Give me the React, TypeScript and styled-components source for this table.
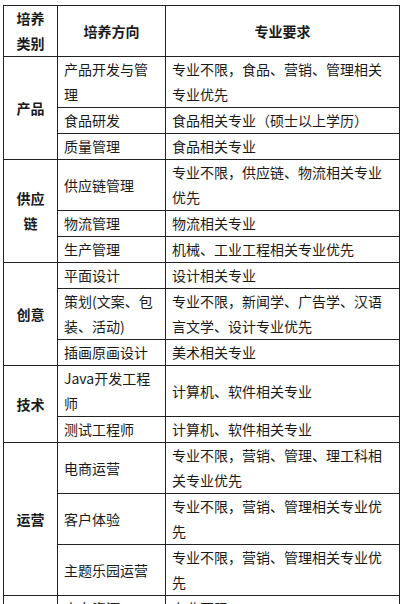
import React from 'react';
import styled, { createGlobalStyle } from 'styled-components';

const GlobalStyle = createGlobalStyle`
  html, body {
    margin: 0;
    padding: 0;
    background: #fff;
  }
  body {
    font-family: 'Microsoft YaHei', 'Noto Sans CJK SC', 'Noto Sans', sans-serif;
    color: #1a1a1a;
  }
`;

const Page = styled.div`
  padding: 0 0 0 3px;
`;

// bottom edge of a heading scrolled just out of view
const Caption = styled.div`
  height: 5px;
  overflow: hidden;
  color: #3a7bd0;
  font-size: 14px;
  font-weight: bold;
  line-height: 16px;

  span {
    display: block;
    margin-top: -16px;
  }
`;

const Table = styled.table`
  width: 396px;
  border-collapse: collapse;
  table-layout: fixed;
  font-size: 14px;
  line-height: 25px;
`;

const Cell = styled.td<{ $head?: boolean; $center?: boolean }>`
  border: 1px solid #222;
  padding: 0 6px;
  vertical-align: middle;
  text-align: ${({ $center }) => ($center ? 'center' : 'left')};
  font-weight: ${({ $head }) => ($head ? 'bold' : 'normal')};
  word-break: break-all;
`;

interface Row {
  direction: string;
  requirement: string;
}

interface Group {
  category: string;
  rows: Row[];
}

const groups: Group[] = [
  {
    category: '产品',
    rows: [
      { direction: '产品开发与管理', requirement: '专业不限，食品、营销、管理相关专业优先' },
      { direction: '食品研发', requirement: '食品相关专业（硕士以上学历）' },
      { direction: '质量管理', requirement: '食品相关专业' },
    ],
  },
  {
    category: '供应链',
    rows: [
      { direction: '供应链管理', requirement: '专业不限，供应链、物流相关专业优先' },
      { direction: '物流管理', requirement: '物流相关专业' },
      { direction: '生产管理', requirement: '机械、工业工程相关专业优先' },
    ],
  },
  {
    category: '创意',
    rows: [
      { direction: '平面设计', requirement: '设计相关专业' },
      { direction: '策划(文案、包装、活动)', requirement: '专业不限，新闻学、广告学、汉语言文学、设计专业优先' },
      { direction: '插画原画设计', requirement: '美术相关专业' },
    ],
  },
  {
    category: '技术',
    rows: [
      { direction: 'Java开发工程师', requirement: '计算机、软件相关专业' },
      { direction: '测试工程师', requirement: '计算机、软件相关专业' },
    ],
  },
  {
    category: '运营',
    rows: [
      { direction: '电商运营', requirement: '专业不限，营销、管理、理工科相关专业优先' },
      { direction: '客户体验', requirement: '专业不限，营销、管理相关专业优先' },
      { direction: '主题乐园运营', requirement: '专业不限，营销、管理相关专业优先' },
    ],
  },
  {
    category: '职能',
    rows: [
      { direction: '人力资源', requirement: '专业不限' },
      { direction: '财务管理', requirement: '财务、会计相关专业' },
      { direction: '法务', requirement: '法学相关专业' },
    ],
  },
];

const App: React.FC = () => {
  return (
    <Page>
      <GlobalStyle />
      <Caption>
        <span>二、培养方向</span>
      </Caption>
      <Table>
        <colgroup>
          <col style={{ width: 54 }} />
          <col style={{ width: 108 }} />
          <col style={{ width: 234 }} />
        </colgroup>
        <thead>
          <tr>
            <Cell as='th' $head $center>
              培养类别
            </Cell>
            <Cell as='th' $head $center>
              培养方向
            </Cell>
            <Cell as='th' $head $center>
              专业要求
            </Cell>
          </tr>
        </thead>
        <tbody>
          {groups.map((group) =>
            group.rows.map((row, i) => (
              <tr key={group.category + row.direction}>
                {i === 0 && (
                  <Cell rowSpan={group.rows.length} $head $center>
                    {group.category}
                  </Cell>
                )}
                <Cell>{row.direction}</Cell>
                <Cell>{row.requirement}</Cell>
              </tr>
            ))
          )}
        </tbody>
      </Table>
    </Page>
  );
};

export default App;
